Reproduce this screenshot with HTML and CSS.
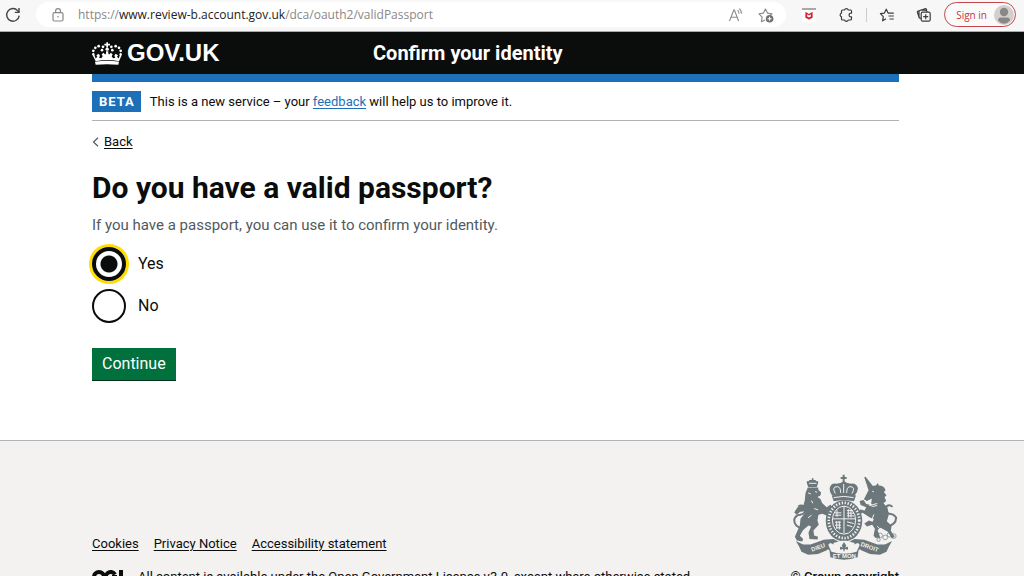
FILE: index.html
```html
<!DOCTYPE html>
<html lang="en">
<head>
<meta charset="utf-8">
<meta name="viewport" content="width=device-width, initial-scale=1">
<title>Confirm your identity</title>
<link rel="stylesheet" href="styles.css">
</head>
<body class="window">
<div class="toolbar">
  <button class="icon-button" aria-label="Refresh">
    <svg width="16" height="16" viewBox="0 0 16 16" fill="none" stroke="#444" stroke-width="1.4"><path d="M14.2 8.6A6.3 6.3 0 1 1 12.6 3.6L14 5.2"/><path d="M14 1v4.4H9.8"/></svg>
  </button>
  <div class="address">
    <svg width="12" height="14" viewBox="0 0 12 14" fill="none" stroke="#888" stroke-width="1.2"><rect x="1" y="4.6" width="10" height="8.4" rx="1.5"/><path d="M3.6 4.6V3a2.4 2.4 0 0 1 4.8 0v1.6"/><circle cx="6" cy="8.8" r=".8" fill="#888" stroke="none"/></svg>
    <p class="url">https://<span class="url-host">www.review-b.account.gov.uk</span>/dca/oauth2/validPassport</p>
    <button class="icon-button" aria-label="Read aloud">
      <svg width="16" height="16" viewBox="0 0 16 16" fill="none" stroke="#888" stroke-width="1.1"><path d="M1.5 14L5.8 3h.6l4.2 11M3 10.2h6.2M9.5 3.2q1.6 1.4 1.4 3.4M11.2 1.6q2.6 2 2 5"/></svg>
    </button>
    <button class="icon-button" aria-label="Add to favourites">
      <svg width="16" height="16" viewBox="0 0 16 16" fill="none" stroke="#888" stroke-width="1.1" stroke-linejoin="round"><path d="M7 13l-3.6 1.8.8-4.7L1 6.8l4.4-.7L7.4 2l2 4.1 4.6.7-2 1.600"/><circle cx="11.600" cy="11.800" r="3.800" fill="#6f6f6f" stroke="none"/><path d="M11.600 9.800v4M9.600 11.800h4" stroke="#fff"/></svg>
    </button>
  </div>
  <div class="tools">
    <button class="icon-button" aria-label="Protection">
      <svg width="14" height="14" viewBox="0 0 14 14"><path fill="#fff" d="M0 2h14v12H0z"/><path fill="#a9a9a9" d="M0 0h14v2H0z"/><path fill="#d3202e" d="M3.400 4l1.800.7L7 6l1.800-1.300 1.800-.7v5.800L7 11.500 3.400 9.800z"/><path fill="#fff" d="M5.200 6.300L7 7.500l1.800-1.200v2.300L7 9.500l-1.800-.9z"/></svg>
    </button>
    <button class="icon-button" aria-label="Extensions">
      <svg width="16" height="16" viewBox="0 0 16 16" fill="none" stroke="#3d3d3d" stroke-width="1.200" stroke-linejoin="round"><path d="M4.500 3h2a2 2 0 0 1 3.800 0h2.200q1 0 1 1v2.200q-2.400-.3-2.400 1.800t2.400 1.800V12q0 1-1 1h-2.200a2 2 0 0 1-3.800 0h-2q-1 0-1-1V9.900a2 2 0 0 1 0-3.800V4q0-1 1-1z"/></svg>
    </button>
    <span class="divider"></span>
    <button class="icon-button" aria-label="Favourites">
      <svg width="16" height="16" viewBox="0 0 16 16" fill="none" stroke="#3d3d3d" stroke-width="1.200" stroke-linejoin="round"><path d="M7 11.800l-3.400 2 .7-4.200-2.900-2.900 4-.6L7.300 2.200l1.800 3.900h5.700M6.800 12l.2-.2M9.500 9h5.300M10.500 12h4.300"/></svg>
    </button>
    <button class="icon-button" aria-label="Collections">
      <svg width="16" height="16" viewBox="0 0 16 16" fill="none" stroke="#3d3d3d" stroke-width="1.200"><rect x="5.200" y="5.200" width="9" height="9" rx="1.500"/><path d="M9.700 7.200v5M7.200 9.700h5M3.400 11.200L1.500 5.600q-.4-1.200.8-1.600l6.600-2.200q1.200-.4 1.600.8l.2.600M5.200 11.500q-2.200-.2-2.200-2.300V5.200q0-2 2-2h4q1.800 0 2.200 1.800"/></svg>
    </button>
    <button class="sign-in">Sign in
      <svg width="20" height="20" viewBox="0 0 20 20"><circle cx="10" cy="10" r="10" fill="#d2d0ce"/><circle cx="10" cy="7" r="4.200" fill="#8a8886"/><path fill="#8a8886" d="M4 15.500q0-3 3-3h6q3 0 3 3-2.500 3.200-6 3.200t-6-3.200z"/></svg>
    </button>
  </div>
</div>
<div class="viewport">
  <header class="header">
    <div class="container header-row">
      <a class="logo" href="#">
        <svg width="30" height="23" viewBox="275 122 90 68" fill="#fff" aria-hidden="true">
          <path d="M318 122h5v5h6v5h-6v6h-5v-6h-6v-5h6z"/>
          <circle cx="308" cy="136" r="4"/><circle cx="333" cy="136" r="4"/><circle cx="295" cy="134" r="4"/><circle cx="346" cy="134" r="4"/><circle cx="285" cy="139" r="4"/><circle cx="356" cy="139" r="4"/><circle cx="279" cy="148" r="4"/><circle cx="361" cy="148" r="4"/><circle cx="279" cy="158" r="3.500"/><circle cx="361" cy="158" r="3.500"/><circle cx="305" cy="146" r="4"/><circle cx="336" cy="146" r="4"/>
          <circle cx="320.500" cy="143" r="5"/>
          <path d="M277 161l5-1 4 11 5-5-3-5 7-4 4 6-3 6 7 1 4-6-3-6 6-4 4 5 3-2v-8h7v8l3 2 4-5 6 4-3 6 4 6 7-1-3-6 4-6 7 4-3 5 5 5 4-11 5 1-8 18q-35-7-70 0z"/>
          <path d="M284 181q36-7 72 0l-2 9q-34-4-68 0z"/>
        </svg>
        <span>GOV.UK</span>
      </a>
      <a class="service-name" href="#">Confirm your identity</a>
    </div>
  </header>
  <div class="container">
    <div class="blue-bar"></div>
    <div class="phase">
      <strong class="tag">BETA</strong>
      <span>This is a new service – your <a class="feedback" href="#">feedback</a> will help us to improve it.</span>
    </div>
    <a class="back" href="#">
      <svg width="8" height="10" viewBox="0 0 8 10" fill="none" stroke="#505a5f" stroke-width="1.200"><path d="M6 .8L1.500 5 6 9.200"/></svg>
      <span class="back-label">Back</span>
    </a>
    <main class="main">
      <form>
        <fieldset class="question">
          <legend class="legend"><h1 class="heading">Do you have a valid passport?</h1></legend>
          <p class="hint">If you have a passport, you can use it to confirm your identity.</p>
          <div class="choices">
            <label class="choice"><input class="radio radio-focus" type="radio" name="passport" checked>Yes</label>
            <label class="choice"><input class="radio" type="radio" name="passport">No</label>
          </div>
        </fieldset>
        <button class="continue" type="button">Continue</button>
      </form>
    </main>
  </div>
  <footer class="footer">
    <div class="container footer-row">
      <div class="footer-meta">
        <nav class="footer-links"><a href="#">Cookies</a><a href="#">Privacy Notice</a><a href="#">Accessibility statement</a></nav>
        <div class="licence">
          <svg width="34" height="14" viewBox="0 0 34 14" fill="none" stroke="#0b0c0c" stroke-width="4" aria-hidden="true"><circle cx="7" cy="7" r="5"/><path d="M23 4.500A5 5 0 1 0 23 9.500V7h-3M29 0v12h5"/></svg>
          <span>All content is available under the Open Government Licence v3.0, except where otherwise stated</span>
        </div>
      </div>
      <a class="copyright" href="#">
        <svg class="arms" width="106" height="87" viewBox="32 28 318 262" aria-hidden="true">
          <!-- lion -->
          <path d="M91 41h5v5h7v4q9-3 7 5l-4 12H80l-4-12q-2-8 7-5v-4h8z"/>
          <path d="M79 69h31l1 7 8 8-2 9-9 4 9 6 5 12 14 13 12-8 3 10-12 11 8 6-5 9-19-8-12 3-3 17 4 13-16 17 2 15 12 4-2 8-24-1-3-20 8-18-8-3-16 14-10 17 10 10-3 7-16-3-6-11 15-34 2-20 12-15 3-8-16 2-10 9-8-7 10-16 18-7 4-14 2-22z"/>
          <path class="line" d="M64 192Q38 188 38 166 42 152 56 151 75 147 70 130 62 118 50 126"/>
          <path class="cut" d="M80 85l8 3M101 81l6 2M83 56h22M90 108l4 8M80 160l10-8M98 132l12 4"/>
          <!-- unicorn -->
          <path d="M249 38l4-2 22 28 10-2 5-7 3 8q16 0 20 14l-5 5 8 10-6 6 5 11-8 7 12 14 4 20-6 20 14 14-2 16 12 16-9 6-12-20-22-12-9 7 8 22-14 2-6-8 4-20-8-12-16 5-8-9 14-9 11 4 4-8-12-5-22-14-15 8-6-9 15-9 12 3 5-10-17-7-3-12 12-3 8 12 14 3 3-19-15 7-9-5 14-27z"/>
          <path class="line" d="M316 186Q344 182 345 160 339 149 324 148 308 141 314 128 323 117 334 127"/>
          <path class="cut" d="M259 115q14 10 29 2M263 121q12 8 25 2M273 80l5 2M278 150l-7 18M288 185l12 12"/>
          <g class="chain"><circle cx="297" cy="213" r="7"/><circle cx="312" cy="219" r="7"/><circle cx="325" cy="211" r="7"/><circle cx="338" cy="215" r="7"/><circle cx="292" cy="226" r="5"/></g>
          <!-- crown and shield -->
          <path d="M184 30h6v7h6v6h-6v8h-6v-8h-6v-6h6z"/>
          <path d="M154 93q-10-8-9-23 4-16 20-13 14 0 22-8 10 8 23 8 17-1 20 14-1 14-10 22z"/>
          <path d="M151 93q36-9 73 0l-6 17q-30-6-61 0z"/>
          <path class="cut" d="M162 87q-12-21 6-21 10 1 10 19M212 87q12-21-6-21-10 1-10 19M187 58v27M157 99q30-7 60 0"/>
          <ellipse cx="188" cy="169" rx="55" ry="62"/>
          <ellipse class="garter" cx="188" cy="168" rx="46" ry="53"/>
          <ellipse class="cut" cx="188" cy="167" rx="35" ry="42"/>
          <path class="cut" d="M188 126v80M155 163h66M167 137v20M160 145h20M160 152h20M197 138h18M197 146h21M197 154h21M161 173h18M161 182h18M166 190h13M197 172l20 5M197 182l16 5M201 134v25M209 137v22M166 170v23M174 170v25"/>
          <!-- ribbon -->
          <path d="M43 230l22 10 22 0 38-13 18 3-5 27-28 12-30 2-20-9-8-17zM333 230l-22 10-22 0-38-13-18 3 5 27 28 12 30 2 20-9 8-17z"/>
          <path d="M126 226l30-2 17 8-14 9-12-5-7 4 10 22q38 12 76 0l10-22-7-4-12 5-14-9 17-8 30 2-8 27-10 4-3 22q-41 14-82 0l-3-22-10-4z"/>
          <path class="hollow" d="M156 236l24-7h16l24 7-7 27q-25 5-50 0z"/>
          <path d="M188 233l7 11-4 5 9-2v9l-9-2-3 9-3-9-9 2v-9l9 2-4-5z"/>
          <text class="motto" x="92" y="262" transform="rotate(-20 92 262)">DIEU</text>
          <text class="motto" x="154" y="281">ET MON</text>
          <text class="motto" x="237" y="244" transform="rotate(20 237 244)">DROIT</text>
        </svg>
        <span>© Crown copyright</span>
      </a>
    </div>
  </footer>
</div>
</body>
</html>
```
FILE: styles.css
```css
* { box-sizing: border-box; }

.window {
  margin: 0;
  height: 100vh;
  display: flex;
  flex-direction: column;
  overflow: hidden;
  background: #fff;
  color: #0b0c0c;
  font-family: Roboto, "Liberation Sans", sans-serif;
  font-size: 16px;
  line-height: 20px;
}

a { color: inherit; text-underline-offset: 2px; }
button { font-family: inherit; cursor: pointer; }
svg { display: block; flex: none; }

.toolbar {
  flex: none;
  display: flex;
  align-items: center;
  gap: 15px;
  height: 32px;
  padding: 0 8px 2px 5px;
  background: #f7f7f7;
  border-bottom: 1px solid #aaa;
  font-family: "Open Sans", "Noto Sans", sans-serif;
}

.icon-button { padding: 0; border: 0; background: none; }

.address {
  flex: 1;
  display: flex;
  align-items: center;
  gap: 14px;
  height: 25px;
  padding: 0 12px 0 16px;
  border-radius: 13px;
  background: #fff;
}

.url { flex: 1; margin: 0; font-size: 12px; line-height: 16px; color: #888; }
.url-host { color: #222; }

.tools { display: flex; align-items: center; gap: 13px; margin-left: -4px; }
.tools .icon-button { width: 24px; display: flex; justify-content: center; }
.divider { width: 1px; height: 14px; background: #ccc; margin: 0 -5px; }

.sign-in {
  display: flex;
  align-items: center;
  gap: 7px;
  height: 25px;
  margin-left: -5px;
  padding: 0 1px 0 11px;
  border: 1px solid #c4474e;
  border-radius: 13px;
  background: #fafafa;
  color: #c4373e;
  font-size: 10px;
}

.viewport { flex: 1; min-height: 0; overflow: hidden; display: flex; flex-direction: column; }

.container {
  width: 100%;
  max-width: 840px;
  margin: 0 auto;
  padding-right: 33px;
}

.header { flex: none; background: #0b0c0c; color: #fff; }
.header-row { display: grid; grid-template-columns: 281px 1fr; align-items: center; height: 42px; }
.header a { text-decoration: none; }
.logo {
  display: flex;
  align-items: center;
  gap: 5px;
  font: bold 24px/30px "Liberation Sans", sans-serif;
}
.service-name { font-size: 20px; font-weight: 700; line-height: 24px; }

.blue-bar { height: 8px; background: #1d70b8; }

.phase {
  display: flex;
  align-items: center;
  gap: 9px;
  padding: 9px 0 8px;
  border-bottom: 1px solid #b1b4b6;
  font-size: 13px;
}
.tag { padding: 0 6px 0 7px; background: #1d70b8; color: #fff; line-height: 21px; letter-spacing: 1px; }
.feedback { color: #1d70b8; }

.back {
  display: inline-flex;
  align-items: center;
  gap: 4px;
  margin-top: 11px;
  font-size: 13px;
  text-decoration: none;
}
.back-label { text-decoration: underline; }

.main { padding: 16px 0 60px; }
.question { margin: 0; padding: 0; border: 0; }
.legend { padding: 0; }
.heading { margin: 0; font-size: 30px; line-height: 40px; }
.hint { margin: 7px 0 12px; color: #505a5f; font-size: 15px; }

.choices { display: grid; gap: 8px; }
.choice { display: flex; align-items: center; gap: 12px; width: max-content; }
.radio {
  appearance: none;
  width: 34px;
  height: 34px;
  margin: 0;
  border: 2px solid #0b0c0c;
  border-radius: 50%;
  background: #fff;
}
.radio:checked { background: radial-gradient(circle, #0b0c0c 8px, #fff 9px); }
.radio-focus { border-width: 4px; box-shadow: 0 0 0 3px #fd0; }

.continue {
  display: block;
  margin-top: 25px;
  padding: 6px 10px;
  border: 0;
  background: #00703c;
  box-shadow: 0 1px 0 #002d18;
  color: #fff;
  font-size: 16px;
  line-height: 20px;
}

.footer {
  flex: 1 0 auto;
  padding: 33px 0;
  border-top: 1px solid #b1b4b6;
  background: #f3f2f1;
  font-size: 13px;
}
.footer-row { display: flex; justify-content: space-between; align-items: flex-end; }
.footer-links { display: flex; gap: 15px; }
.licence { display: flex; align-items: center; gap: 12px; margin-top: 13px; }
.copyright { display: grid; justify-items: center; gap: 6px; font-weight: 500; text-decoration: none; }

.arms { fill: #6b777b; }
.arms .line { fill: none; stroke: #6b777b; stroke-width: 6; }
.arms .chain { fill: none; stroke: #6b777b; stroke-width: 2; }
.arms .cut { fill: none; stroke: #f3f2f1; stroke-width: 3; }
.arms .garter { fill: none; stroke: #f3f2f1; stroke-width: 8; stroke-dasharray: 4 5; }
.arms .hollow { fill: #f3f2f1; }
.arms .motto { fill: #f3f2f1; font: bold 18px "Liberation Sans", sans-serif; }
```
